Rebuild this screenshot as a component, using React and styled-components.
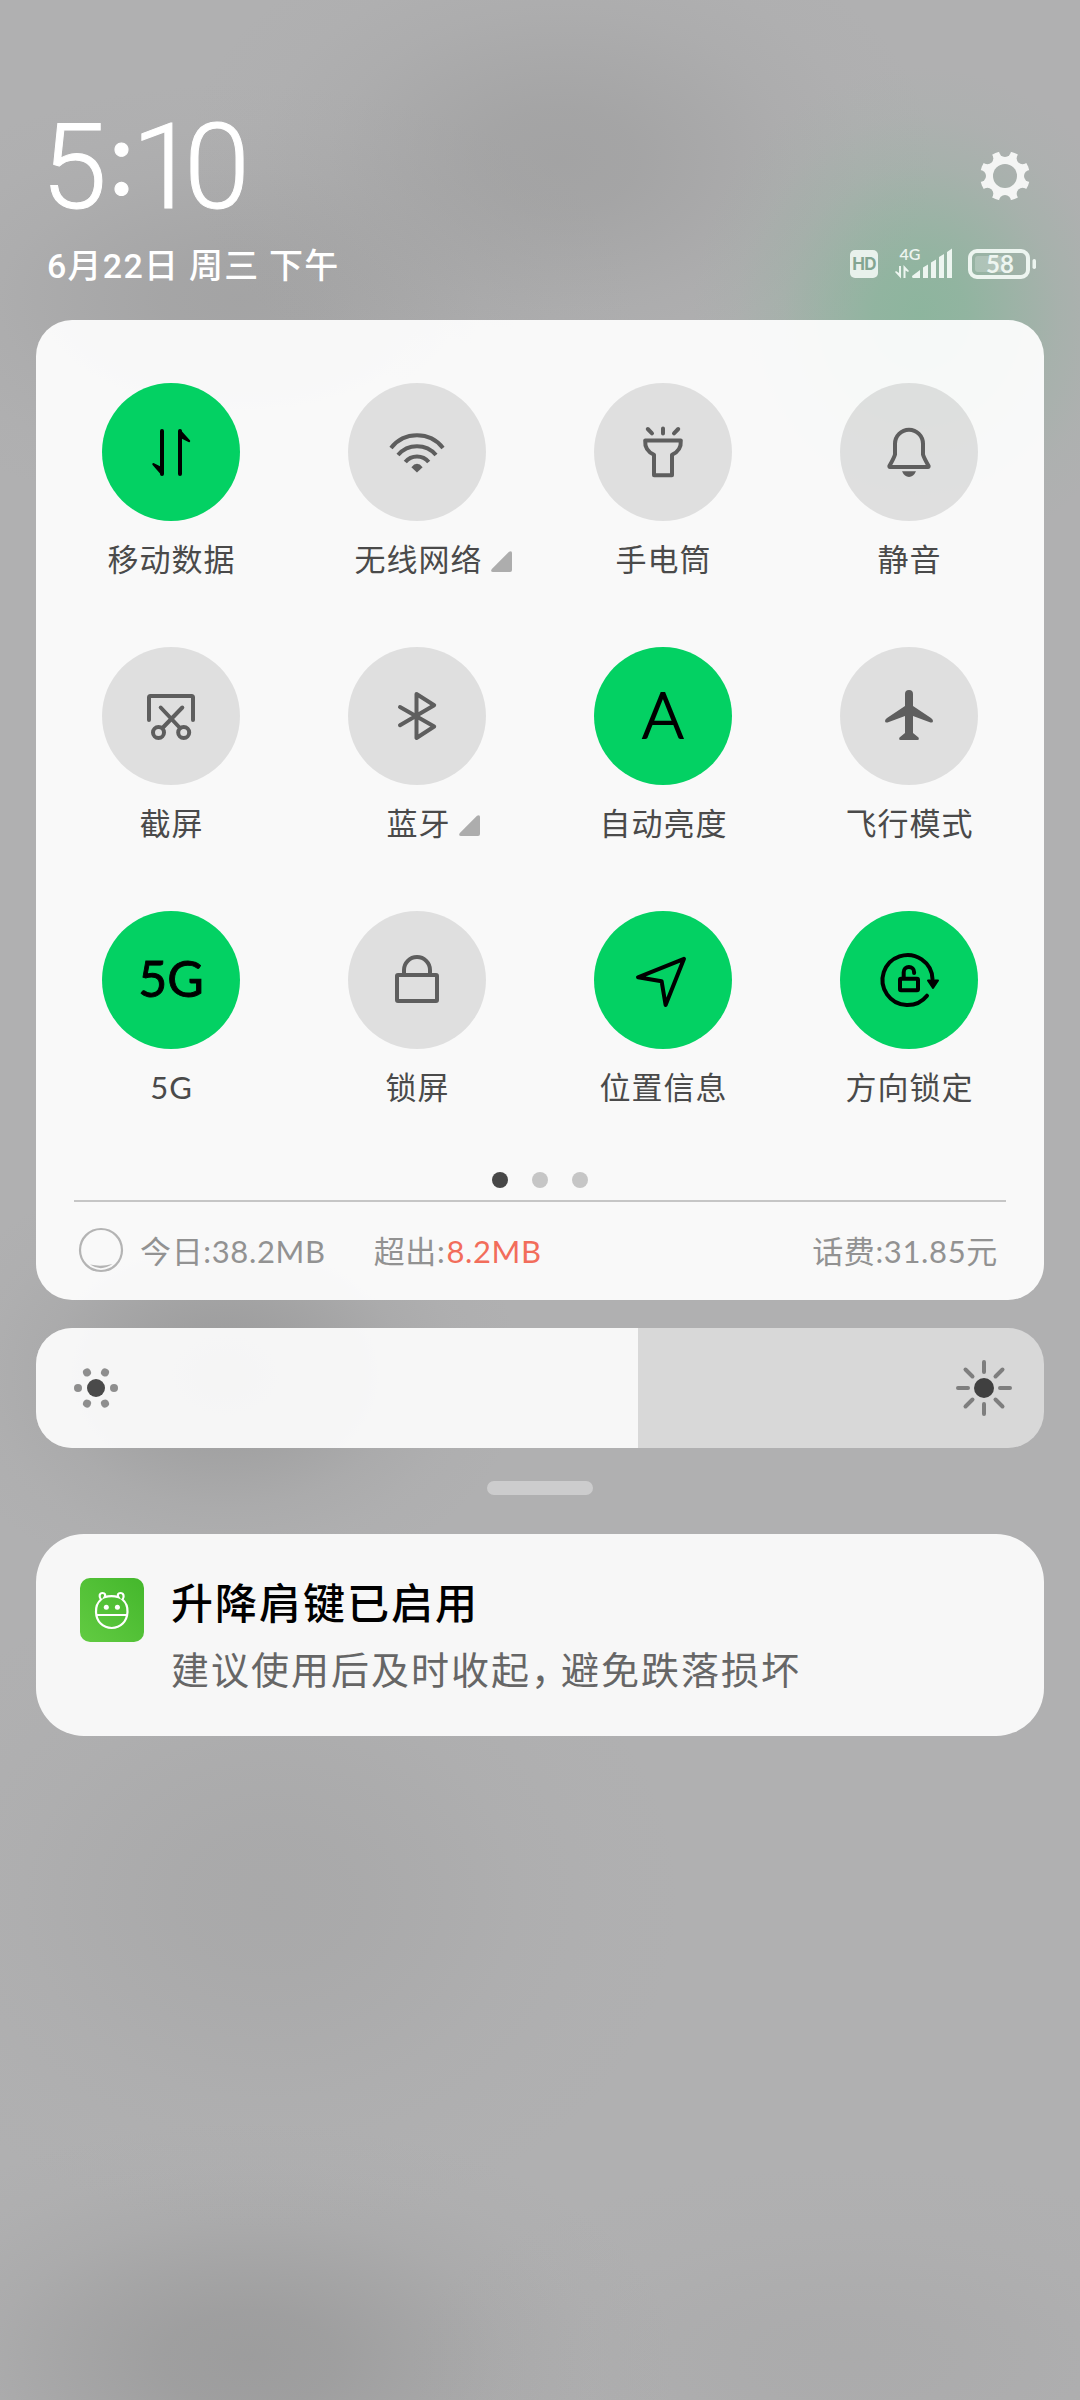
import React from "react";
import styled, { createGlobalStyle, css } from "styled-components";

const GlobalStyle = createGlobalStyle`
  * { box-sizing: border-box; }
  body { margin: 0; background: #b0b0b1; }
`;

const CJK = `"Noto Sans CJK SC", sans-serif`;

// A soft spot of colour with a bell-shaped falloff.
const blob = (rx, ry, x, y, rgb, a) =>
  `radial-gradient(ellipse ${rx}px ${ry}px at ${x}px ${y}px, ` +
  [[1, 0], [0.88, 20], [0.58, 40], [0.26, 60], [0.07, 80], [0, 100]]
    .map(([k, s]) => `rgba(${rgb}, ${(k * a).toFixed(3)}) ${s}%`)
    .join(", ") +
  ")";

const Screen = styled.main`
  width: 1080px;
  height: 2400px;
  padding: 0 36px;
  overflow: hidden;
  display: flex;
  flex-direction: column;
  font-family: Lato, ${CJK};
  background:
    ${blob(230, 250, 920, 315, "118, 184, 145", 0.6)},
    ${blob(380, 250, 560, 160, "140, 140, 140", 0.36)},
    ${blob(400, 220, 240, 300, "140, 140, 140", 0.34)},
    ${blob(300, 220, 225, 1375, "140, 140, 140", 0.56)},
    ${blob(420, 340, 270, 1900, "140, 140, 140", 0.2)},
    ${blob(430, 240, 250, 2360, "132, 132, 132", 0.44)},
    ${blob(460, 200, 850, 2360, "140, 140, 140", 0.14)},
    #b0b0b1;
`;

const Header = styled.header`
  height: 320px;
  flex: none;
  padding: 97px 7px 0 11px;
  display: flex;
  justify-content: space-between;
  color: #fff;
`;

const HeaderLeft = styled.div`
  display: flex;
  flex-direction: column;
`;

const Clock = styled.div`
  display: flex;
  height: 140px;
  margin-left: -6px;
  line-height: 142px;
  font-family: Roboto, sans-serif;
  font-weight: 300;
  font-size: 119px;
  letter-spacing: -13.5px;
  -webkit-text-stroke: 1px #fff;
`;

const Colon = styled.span`
  margin: 0 -3px 0 15px;
  line-height: 115px;
  font-family: Lato, sans-serif;
  font-weight: 400;
  font-size: 104px;
  letter-spacing: 0;
`;

const DateLine = styled.div`
  margin-top: 4px;
  height: 50px;
  line-height: 50px;
  font-family: Roboto, ${CJK};
  font-weight: 500;
  font-size: 34px;
  letter-spacing: 1.25px;
  white-space: nowrap;
`;

const HeaderRight = styled.div`
  display: flex;
  flex-direction: column;
  align-items: flex-end;
  padding-top: 54px;
`;

const GearSvg = styled.svg`
  width: 50px;
  height: 50px;
  margin-right: 7px;
`;

const StatusRow = styled.div`
  display: flex;
  align-items: flex-start;
  margin-top: 47px;
  height: 32px;
  color: #edf5f0;
`;

const HdBadge = styled.span`
  width: 28px;
  height: 28px;
  margin: 2px 15px 0 0;
  border-radius: 5px;
  background: #e9f1ec;
  color: #83a592;
  font: 700 17px/29px Inter, sans-serif;
  letter-spacing: -0.8px;
  text-align: center;
`;

const StatusSvg = styled.svg`
  width: ${(p) => p.$w}px;
  height: 32px;
  margin-right: ${(p) => p.$gap || 0}px;
  overflow: visible;
`;

const Panel = styled.section`
  height: 980px;
  flex: none;
  border-radius: 36px;
  background: rgba(255, 255, 255, 0.92);
  padding: 63px 12px 0;
  display: flex;
  flex-direction: column;
`;

const Tiles = styled.div`
  height: 789px;
  display: grid;
  grid-template-columns: repeat(4, 246px);
  grid-auto-rows: 264px;
`;

const Tile = styled.div`
  display: flex;
  flex-direction: column;
  align-items: center;
`;

const Disc = styled.div`
  width: 138px;
  height: 138px;
  border-radius: 50%;
  display: flex;
  align-items: center;
  justify-content: center;
  ${(p) =>
    p.$on
      ? css`background: #03d163; color: #000;`
      : css`background: rgba(0, 0, 0, 0.1); color: #5e5e5e;`}
`;

const DiscSvg = styled.svg`
  width: 138px;
  height: 138px;
  fill: none;
  stroke: currentColor;
  stroke-width: 4;
  stroke-linecap: round;
  stroke-linejoin: round;
`;

const DiscText = styled.span`
  font: ${(p) => p.$weight} ${(p) => p.$size}px/134px Lato, sans-serif;
  height: 138px;
  -webkit-text-stroke: ${(p) => p.$stroke}px #000;
`;

const Label = styled.div`
  position: relative;
  margin-top: 15px;
  padding-left: ${(p) => (p.$more ? 3 : 1)}px;
  height: 46px;
  line-height: 46px;
  font-size: 31px;
  letter-spacing: 1px;
  color: #4a4a4a;
  white-space: nowrap;
`;

const Corner = styled.svg`
  position: absolute;
  left: calc(100% + 8px);
  top: 15px;
  width: 21px;
  height: 21px;
`;

const Pager = styled.div`
  display: flex;
  justify-content: center;
  gap: 24px;
`;

const PageDot = styled.i`
  width: 16px;
  height: 16px;
  border-radius: 50%;
  background: ${(p) => (p.$on ? "#474747" : "#c6c6c6")};
`;

const Usage = styled.div`
  margin: 12px 26px 0;
  border-top: 2px solid #c6c6c6;
  height: 98px;
  padding: 0 8px 2px 4px;
  display: flex;
  align-items: center;
  font-size: 31px;
  letter-spacing: 0.65px;
  color: #929292;
  white-space: nowrap;
`;

const UsageSvg = styled.svg`
  width: 46px;
  height: 46px;
  margin: 1px 16px 0 0;
`;

const Stat = styled.span`
  margin-right: ${(p) => p.$gap || 0}px;
  margin-left: ${(p) => (p.$end ? "auto" : 0)};
`;

const Over = styled.span`
  margin-left: 1px;
  color: #f26d5b;
`;

const Slider = styled.section`
  margin-top: 28px;
  height: 120px;
  flex: none;
  border-radius: 36px;
  overflow: hidden;
  background: rgba(255, 255, 255, 0.5);
  display: flex;
`;

const SliderFill = styled.div`
  width: 602px;
  background: rgba(255, 255, 255, 0.8);
  display: flex;
  align-items: center;
  padding-left: 30px;
`;

const SliderRest = styled.div`
  flex: 1;
  display: flex;
  align-items: center;
  justify-content: flex-end;
  padding-right: 30px;
`;

const SunSvg = styled.svg`
  width: 60px;
  height: 60px;
`;

const Handle = styled.div`
  width: 106px;
  height: 14px;
  margin: 33px auto 39px;
  flex: none;
  border-radius: 7px;
  background: rgba(255, 255, 255, 0.36);
`;

const Notice = styled.article`
  height: 202px;
  flex: none;
  border-radius: 48px;
  background: rgba(255, 255, 255, 0.9);
  padding: 38px 44px;
  display: flex;
`;

const AppIcon = styled.div`
  width: 64px;
  height: 64px;
  margin: 6px 27px 0 0;
  border-radius: 10px;
  background: linear-gradient(45deg, #62cb42, #44b72c);
`;

const NoticeTitle = styled.div`
  height: 62px;
  line-height: 62px;
  font-size: 42px;
  font-weight: 500;
  letter-spacing: 2px;
  color: #000;
`;

const NoticeBody = styled.div`
  margin-top: 5px;
  height: 60px;
  line-height: 60px;
  font-size: 38px;
  letter-spacing: 2px;
  color: #666;
  white-space: nowrap;
`;

const Comma = styled.span`
  letter-spacing: -8px;
`;

const Gear = () => (
  <GearSvg viewBox="-25 -25 50 50">
    <mask id="gear">
      <rect x="-25" y="-25" width="50" height="50" fill="#fff" />
      <circle r="12" fill="#000" />
      {[0, 45, 90, 135, 180, 225, 270, 315].map((a) => (
        <circle key={a} cy="-25" r="6" fill="#000" transform={`rotate(${a})`} />
      ))}
    </mask>
    <circle r="25" fill="#f4f5f4" mask="url(#gear)" />
  </GearSvg>
);

const icons = {
  data: (
    <>
      <path d="M60 48V91M78 48V91" />
      <path d="M60 91 51.5 81.2 60 85.5ZM78 48 87 58 78 53.5Z" fill="currentColor" strokeWidth="2.4" />
    </>
  ),
  wifi: (
    <g strokeLinecap="butt">
      <path d="M43 65A33 33 0 0 1 95 65M50 72A25 25 0 0 1 88 72M57.3 79A15 15 0 0 1 80.7 79" />
      <path d="M63.4 84.2Q69 77.5 74.6 84.2L69 89.5Z" fill="currentColor" stroke="none" />
    </g>
  ),
  torch: (
    <path d="M53.8 46 58 50.4M69 45.5V50.5M84.2 46 80 50.4M51.2 57.5H86.8Q87.5 67.5 78 71.8V92.3H60V71.8Q50.5 67.5 51.2 57.5Z" />
  ),
  bell: (
    <>
      <path d="M55 60.7a14 14 0 0 1 28 0V71.5Q84 75 88.6 83Q88.8 84 88 84H50Q49.2 84 49.4 83Q54 75 55 71.5Z" />
      <path d="M62 88.3H76Q73.5 94 69 94T62 88.3Z" fill="currentColor" stroke="none" />
    </>
  ),
  shot: (
    <>
      <path d="M47 73V50.5Q47 49 48.5 49H89.5Q91 49 91 50.5V73M58.7 60.5 78 81M80.3 60.5 60.5 81" />
      <circle cx="56.5" cy="85.5" r="5.5" />
      <circle cx="81.7" cy="85.5" r="5.5" />
    </>
  ),
  bluetooth: <path d="M52 60 86.2 79.5 68.5 91V47L86.2 58.2 52 78.2" />,
  plane: (
    <path
      d="M69 43q4 0 4 4V59L91 71q2 1.500 2 3q0 2-2.500 1.500L73 69V86L78.500 90.500q1 2.500-1 2.500H60.500q-2 0-1-2.500L65 86V69L47.500 75.500Q45 76 45 74q0-1.500 2-3L65 59V47q0-4 4-4Z"
      fill="currentColor"
      stroke="none"
    />
  ),
  lock: (
    <>
      <rect x="49" y="64" width="40" height="26" rx="1" />
      <path d="M56 64V59a13 13 0 0 1 26 0V64" />
    </>
  ),
  locate: <path d="M90 47.8 44 66.3 67.6 70.2 71.6 94Z" />,
  rotate: (
    <>
      <path d="M92.5 68A25 25 0 1 0 87 84.7" />
      <path d="M88 69.5H98L93 77Z" fill="currentColor" strokeWidth="2" />
      <rect x="60" y="67.8" width="18" height="11.4" rx="1" />
      <path d="M63.7 67V61.2a5.2 5.2 0 0 1 10.4 0V62" />
    </>
  ),
};

const tiles = [
  { icon: "data", label: "移动数据", on: true },
  { icon: "wifi", label: "无线网络", more: true },
  { icon: "torch", label: "手电筒" },
  { icon: "bell", label: "静音" },
  { icon: "shot", label: "截屏" },
  { icon: "bluetooth", label: "蓝牙", more: true },
  { text: "A", size: 63, weight: 300, stroke: 1.8, label: "自动亮度", on: true },
  { icon: "plane", label: "飞行模式" },
  { text: "5G", size: 50, weight: 400, stroke: 0.9, label: "5G", on: true },
  { icon: "lock", label: "锁屏" },
  { icon: "locate", label: "位置信息", on: true },
  { icon: "rotate", label: "方向锁定", on: true },
];

export default function App() {
  return (
    <Screen>
      <GlobalStyle />
      <Header>
        <HeaderLeft>
          <Clock>
            <span>5</span>
            <Colon>:</Colon>
            <span>10</span>
          </Clock>
          <DateLine>6月22日 周三 下午</DateLine>
        </HeaderLeft>
        <HeaderRight>
          <Gear />
          <StatusRow>
            <HdBadge>HD</HdBadge>
            <StatusSvg $w={62} $gap={13} viewBox="893 248 62 32" fill="currentColor">
              <text x="899.5" y="259.5" fontFamily="Lato" fontSize="16" fontWeight="600">4G</text>
              <path d="M899 266h2v12.5L895 272l1-1 3 2ZM903.5 265l5.5 6-1 1-2.5-1.5V278h-2Z" />
              <path d="M912 276 920 270V278H913Q912 278 912 276ZM923 267.5 928 264.5V278H923ZM931 262.5 936 259.5V278H931ZM939 257 944 254V278H939ZM947 252 952 248.5V278H947Z" />
            </StatusSvg>
            <StatusSvg $w={69} viewBox="968 248 69 32" fill="none">
              <rect x="970" y="251" width="58" height="26" rx="7" stroke="currentColor" strokeWidth="4" />
              <rect x="975" y="256" width="28" height="16" rx="3" fill="#fff" opacity=".22" />
              <rect x="1032.5" y="259" width="3.5" height="10" rx="1.7" fill="currentColor" />
              <text x="1000" y="273" textAnchor="middle" fontFamily="Lato" fontSize="24" fontWeight="700" fill="currentColor">58</text>
            </StatusSvg>
          </StatusRow>
        </HeaderRight>
      </Header>

      <Panel>
        <Tiles>
          {tiles.map((t) => (
            <Tile key={t.label}>
              <Disc $on={t.on}>
                {t.icon ? (
                  <DiscSvg viewBox="0 0 138 138">{icons[t.icon]}</DiscSvg>
                ) : (
                  <DiscText $size={t.size} $weight={t.weight} $stroke={t.stroke}>{t.text}</DiscText>
                )}
              </Disc>
              <Label $more={t.more}>
                {t.label}
                {t.more && (
                  <Corner viewBox="0 0 21 21">
                    <path d="M18 .8Q21-1 21 2V19Q21 21 19 21H2Q-1 21 .8 18Z" fill="#adadad" />
                  </Corner>
                )}
              </Label>
            </Tile>
          ))}
        </Tiles>
        <Pager>
          <PageDot $on />
          <PageDot />
          <PageDot />
        </Pager>
        <Usage>
          <UsageSvg viewBox="0 0 46 46">
            <circle cx="23" cy="23" r="21" fill="none" stroke="#b4b4b4" strokeWidth="2.2" />
            <path d="M12 37.5Q23 40 34.5 37Q23 45 12 37.5Z" fill="#b4b4b4" />
          </UsageSvg>
          <Stat $gap={48}>今日:38.2MB</Stat>
          <Stat>
            超出:<Over>8.2MB</Over>
          </Stat>
          <Stat $end>话费:31.85元</Stat>
        </Usage>
      </Panel>

      <Slider>
        <SliderFill>
          <SunSvg viewBox="-30 -30 60 60">
            <circle r="9" fill="#4a4a4a" />
            {[0, 60, 120, 180, 240, 300].map((a) => (
              <circle key={a} cx="18" r="4" fill="#8e8e8e" transform={`rotate(${a})`} />
            ))}
          </SunSvg>
        </SliderFill>
        <SliderRest>
          <SunSvg viewBox="-30 -30 60 60">
            <circle r="10" fill="#404040" />
            {[0, 90, 180, 270].map((a) => (
              <path key={a} d="M0-26V-16M18.5-18.5 11.5-11.5" stroke="#7e7e7e" strokeWidth="4" strokeLinecap="round" transform={`rotate(${a})`} />
            ))}
          </SunSvg>
        </SliderRest>
      </Slider>

      <Handle />

      <Notice>
        <AppIcon>
          <svg width="64" height="64" viewBox="0 0 64 64" fill="none" stroke="#fff" strokeWidth="2.2" strokeLinecap="round">
            <path d="M24.5 19.3Q31.5 16.8 38.5 19.3C37 17 38 15 40.5 15C43.5 15 44.8 18.5 42.5 21.5C46 24.5 47.7 29 47.5 34C47 43.5 40.5 50 31.7 50S16.3 43.5 16 34C15.8 29 17.5 24.5 21 21.5C18.5 18.5 19.5 15 22.5 15C25 15 26 17 24.5 19.3ZM16.5 37H47" />
            <circle cx="26.3" cy="29.3" r="2.5" fill="#fff" stroke="none" />
            <circle cx="37.4" cy="29.3" r="2.5" fill="#fff" stroke="none" />
          </svg>
        </AppIcon>
        <div>
          <NoticeTitle>升降肩键已启用</NoticeTitle>
          <NoticeBody>
            建议使用后及时收起<Comma>，</Comma>避免跌落损坏
          </NoticeBody>
        </div>
      </Notice>
    </Screen>
  );
}
